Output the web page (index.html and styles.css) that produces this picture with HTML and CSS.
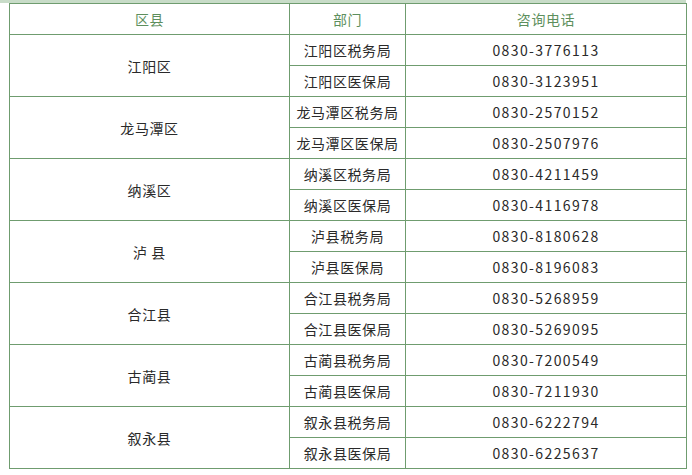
FILE: index.html
```html
<!DOCTYPE html>
<html lang="zh-CN">
<head>
<meta charset="utf-8">
<link rel="stylesheet" href="styles.css">
</head>
<body>
<div class="wrap">
<table class="tbl">
  <colgroup><col class="c1"><col class="c2"><col class="c3"></colgroup>
  <thead>
    <tr><th>区县</th><th>部门</th><th>咨询电话</th></tr>
  </thead>
  <tbody>
    <tr><td rowspan="2" class="county">江阳区</td><td class="dept">江阳区税务局</td><td class="tel">0830-3776113</td></tr>
    <tr><td class="dept">江阳区医保局</td><td class="tel">0830-3123951</td></tr>
    <tr><td rowspan="2" class="county">龙马潭区</td><td class="dept">龙马潭区税务局</td><td class="tel">0830-2570152</td></tr>
    <tr><td class="dept">龙马潭区医保局</td><td class="tel">0830-2507976</td></tr>
    <tr><td rowspan="2" class="county">纳溪区</td><td class="dept">纳溪区税务局</td><td class="tel">0830-4211459</td></tr>
    <tr><td class="dept">纳溪区医保局</td><td class="tel">0830-4116978</td></tr>
    <tr><td rowspan="2" class="county">泸&nbsp;县</td><td class="dept">泸县税务局</td><td class="tel">0830-8180628</td></tr>
    <tr><td class="dept">泸县医保局</td><td class="tel">0830-8196083</td></tr>
    <tr><td rowspan="2" class="county">合江县</td><td class="dept">合江县税务局</td><td class="tel">0830-5268959</td></tr>
    <tr><td class="dept">合江县医保局</td><td class="tel">0830-5269095</td></tr>
    <tr><td rowspan="2" class="county">古蔺县</td><td class="dept">古蔺县税务局</td><td class="tel">0830-7200549</td></tr>
    <tr><td class="dept">古蔺县医保局</td><td class="tel">0830-7211930</td></tr>
    <tr><td rowspan="2" class="county">叙永县</td><td class="dept">叙永县税务局</td><td class="tel">0830-6222794</td></tr>
    <tr><td class="dept">叙永县医保局</td><td class="tel">0830-6225637</td></tr>
  </tbody>
</table>
</div>
</body>
</html>
```

FILE: styles.css
```css
html, body {
  margin: 0;
  padding: 0;
  background: #ffffff;
}
body {
  font-family: "Noto Sans CJK SC", "Noto Sans", sans-serif;
  font-size: 14px;
  color: #333333;
}
.wrap {
  width: 686px;
  border-top: 3px solid #c8dcc8;
}
.tbl {
  margin-left: 9px;
  width: 677px;
  border-collapse: collapse;
  table-layout: fixed;
}
.c1 { width: 280px; }
.c2 { width: 116px; }
.c3 { width: 281px; }
.tbl th,
.tbl td {
  border: 1px solid #6f9c6f;
  padding: 0;
  height: 30px;
  text-align: center;
  vertical-align: middle;
  line-height: 20px;
  letter-spacing: 0.6px;
}
.tbl th {
  font-weight: normal;
  color: #5d8f5d;
}
.tbl td {
  color: #2a2a2a;
}
.tbl td.tel {
  letter-spacing: 1.4px;
}
```
